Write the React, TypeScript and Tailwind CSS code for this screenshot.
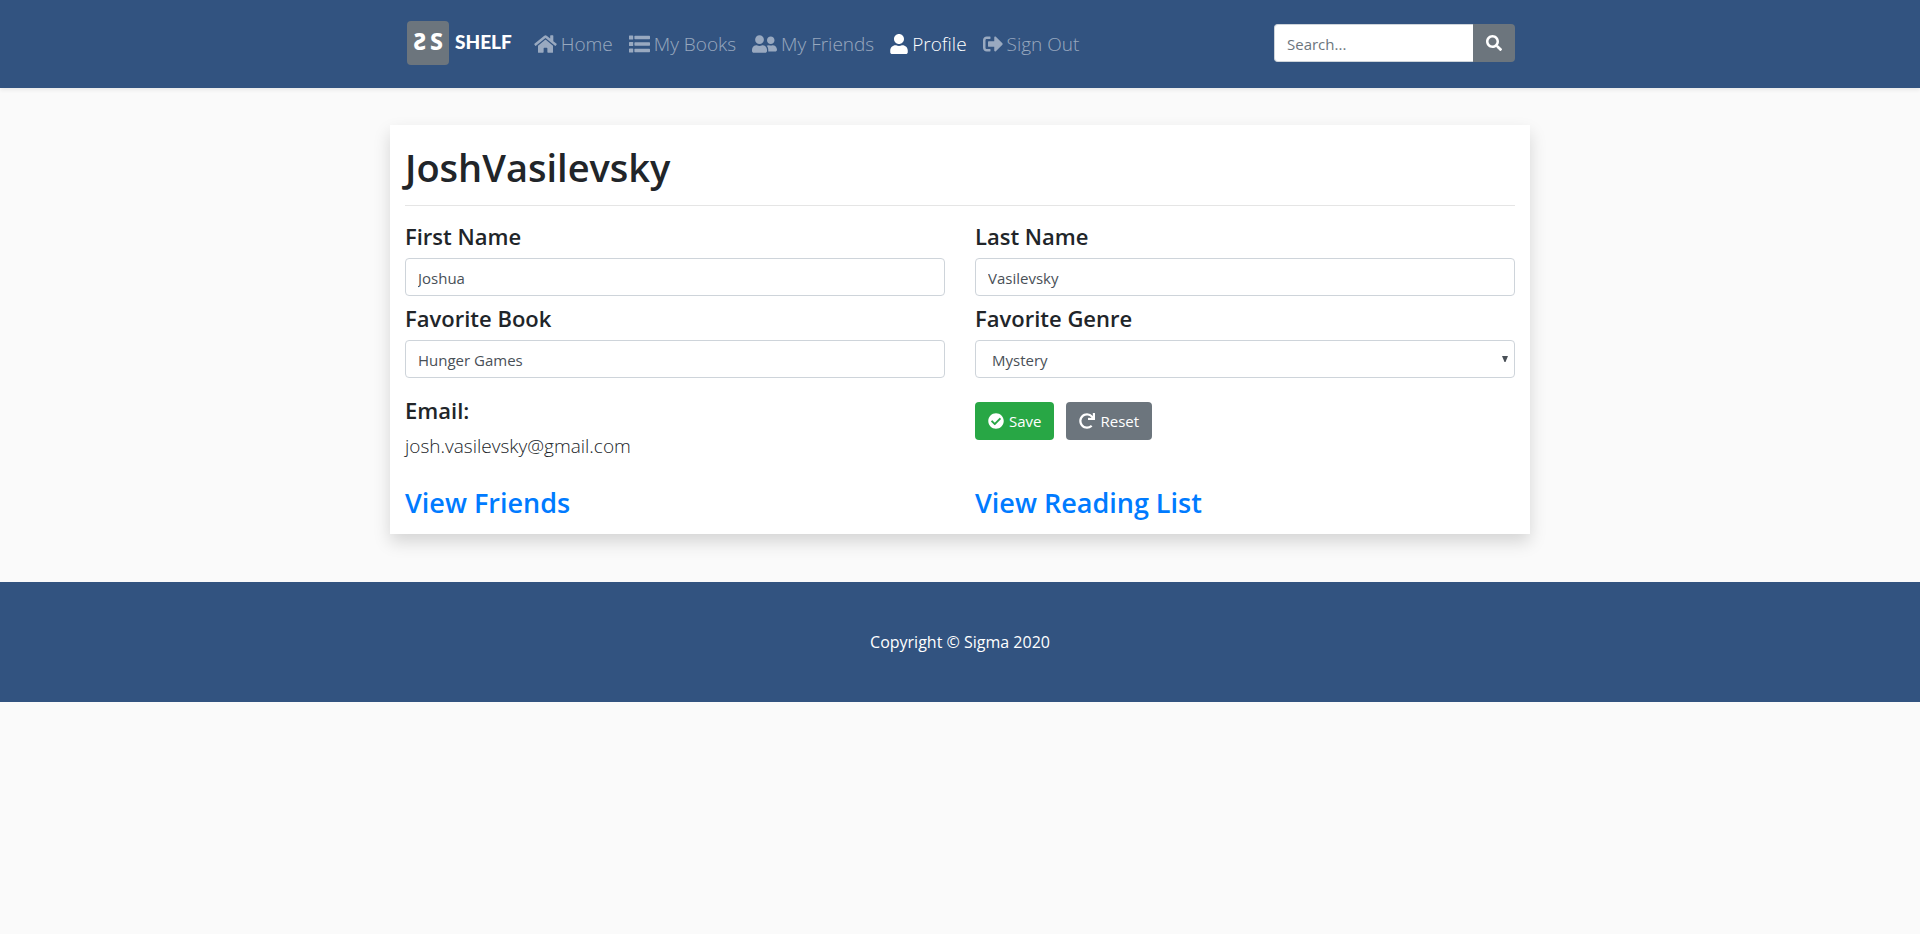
import type { ComponentType, InputHTMLAttributes, ReactNode } from "react";
import {
  FaCheckCircle,
  FaHome,
  FaRedo,
  FaSearch,
  FaSignOutAlt,
  FaUser,
  FaUserFriends,
} from "react-icons/fa";

type NavItem = {
  label: string;
  icon: ComponentType<{ className?: string }>;
  iconClass: string;
  active?: boolean;
};

function ListIcon({ className }: { className?: string }) {
  return (
    <svg className={className} viewBox="0 0 21 20" fill="currentColor" aria-hidden="true">
      {[1.4, 7.9, 14.4].map((y) => (
        <g key={y}>
          <rect x="0" y={y} width="4.2" height="4.2" rx="0.6" />
          <rect x="5.4" y={y + 0.4} width="15.6" height="3.4" rx="0.6" />
        </g>
      ))}
    </svg>
  );
}

const navItems: NavItem[] = [
  { label: "Home", icon: FaHome, iconClass: "h-5 w-[23px]" },
  { label: "My Books", icon: ListIcon, iconClass: "h-5 w-[21px]" },
  { label: "My Friends", icon: FaUserFriends, iconClass: "h-5 w-[25px]" },
  { label: "Profile", icon: FaUser, iconClass: "h-5 w-[18px]", active: true },
  { label: "Sign Out", icon: FaSignOutAlt, iconClass: "h-5 w-[20px]" },
];

const genres = ["Mystery", "Fantasy", "Romance", "Science Fiction", "Biography"];

function Logo() {
  return (
    <a href="#" className="flex items-center gap-1.5">
      <span className="flex h-11 w-[42px] items-center justify-center gap-1 rounded bg-[#6c757d] pb-1 font-['Noto_Sans',sans-serif] text-[23px] font-extrabold leading-6 text-white">
        <span>Ƨ</span>
        <span>S</span>
      </span>
      <span className="pb-0.5 font-['Lato',sans-serif] text-[19px] font-black leading-6 text-white">SHELF</span>
    </a>
  );
}

function Header() {
  return (
    <header className="bg-[#325380] shadow-[0_2px_4px_rgba(0,0,0,0.075)]">
      <div className="mx-auto flex max-w-[1140px] items-center justify-between px-[15px] pb-[26px] pt-6">
        <nav className="-my-1 flex items-center gap-[22px] pl-0.5" aria-label="Main">
          <Logo />
          <ul className="flex items-center gap-4 pt-0.5">
            {navItems.map(({ label, icon: Icon, iconClass, active }) => (
              <li key={label}>
                <a
                  href="#"
                  aria-current={active ? "page" : undefined}
                  className={
                    active
                      ? "flex items-center gap-1 text-[19px] font-light leading-7 text-white"
                      : "flex items-center gap-1 text-[19px] font-light leading-7 text-white/50"
                  }
                >
                  <Icon className={iconClass} />
                  {label}
                </a>
              </li>
            ))}
          </ul>
        </nav>
        <form className="flex" role="search" onSubmit={(e) => e.preventDefault()}>
          <input
            type="search"
            aria-label="Search"
            placeholder="Search..."
            className="h-[38px] w-[199px] rounded-l border border-r-0 border-[#ced4da] bg-white px-3 pt-0.5 text-[15px] text-[#495057] outline-none placeholder:text-[#6c757d]"
          />
          <button
            type="submit"
            aria-label="Search"
            className="flex h-[38px] w-[42px] items-center justify-center rounded-r bg-[#6c757d] text-white"
          >
            <FaSearch className="size-4" />
          </button>
        </form>
      </div>
    </header>
  );
}

function Label({ htmlFor, children }: { htmlFor: string; children: ReactNode }) {
  return (
    <label htmlFor={htmlFor} className="mb-2 block text-[22px] font-semibold leading-7">
      {children}
    </label>
  );
}

const controlClass =
  "block h-[38px] w-full rounded border border-[#ced4da] bg-white pt-0.5 text-[15px] text-[#495057] outline-none";

function TextField({ id, label, ...rest }: { id: string; label: string } & InputHTMLAttributes<HTMLInputElement>) {
  return (
    <div>
      <Label htmlFor={id}>{label}</Label>
      <input id={id} type="text" className={`${controlClass} px-3`} {...rest} />
    </div>
  );
}

function ProfileCard() {
  return (
    <main className="mx-auto mb-12 mt-[37px] max-w-[1140px] bg-white px-[15px] pb-3.5 pt-[18px] shadow-[0_8px_16px_rgba(0,0,0,0.15)]">
      <h1 className="text-[38px] font-semibold leading-[48px]">JoshVasilevsky</h1>
      <hr className="mb-4 mt-3.5 border-black/10" />
      <form onSubmit={(e) => e.preventDefault()}>
        <div className="grid grid-cols-2 gap-x-[30px] gap-y-2">
          <TextField id="first-name" label="First Name" defaultValue="Joshua" />
          <TextField id="last-name" label="Last Name" defaultValue="Vasilevsky" />
          <TextField id="favorite-book" label="Favorite Book" defaultValue="Hunger Games" />
          <div>
            <Label htmlFor="favorite-genre">Favorite Genre</Label>
            <div className="relative">
              <select id="favorite-genre" className={`${controlClass} appearance-none px-4`}>
                {genres.map((genre) => (
                  <option key={genre}>{genre}</option>
                ))}
              </select>
              <svg
                className="pointer-events-none absolute right-[7px] top-4 text-[#495057]"
                width="6"
                height="6"
                viewBox="0 0 6 6"
                aria-hidden="true"
              >
                <path d="M0 0H6L3.5 6H2.5Z" fill="currentColor" />
              </svg>
            </div>
          </div>
        </div>
        <div className="mt-4 grid grid-cols-2 gap-x-[30px]">
          <div>
            <h2 className="mb-2 text-[22px] font-semibold leading-8">Email:</h2>
            <p className="text-[19px] font-light leading-6">josh.vasilevsky@gmail.com</p>
          </div>
          <div className="mt-2 flex items-start gap-3">
            <button
              type="submit"
              className="flex h-[38px] items-center gap-[5px] rounded bg-[#28a745] px-[13px] text-[15px] text-white"
            >
              <FaCheckCircle className="size-4" />
              Save
            </button>
            <button
              type="reset"
              className="flex h-[38px] items-center gap-[5px] rounded bg-[#6c757d] px-[13px] text-[15px] text-white"
            >
              <FaRedo className="size-4" />
              Reset
            </button>
          </div>
        </div>
      </form>
      <div className="mt-7 grid grid-cols-2 gap-x-[30px] text-[27px] font-semibold leading-[34px] text-[#007bff]">
        <h3>
          <a href="#">View Friends</a>
        </h3>
        <h3>
          <a href="#">View Reading List</a>
        </h3>
      </div>
    </main>
  );
}

export default function App() {
  return (
    <div className="min-h-screen bg-[#fafafa] font-['Open_Sans','Noto_Sans',sans-serif] text-base text-[#212529]">
      <Header />
      <ProfileCard />
      <footer className="bg-[#325380] py-12 text-center text-white">
        <p>Copyright © Sigma 2020</p>
      </footer>
    </div>
  );
}
